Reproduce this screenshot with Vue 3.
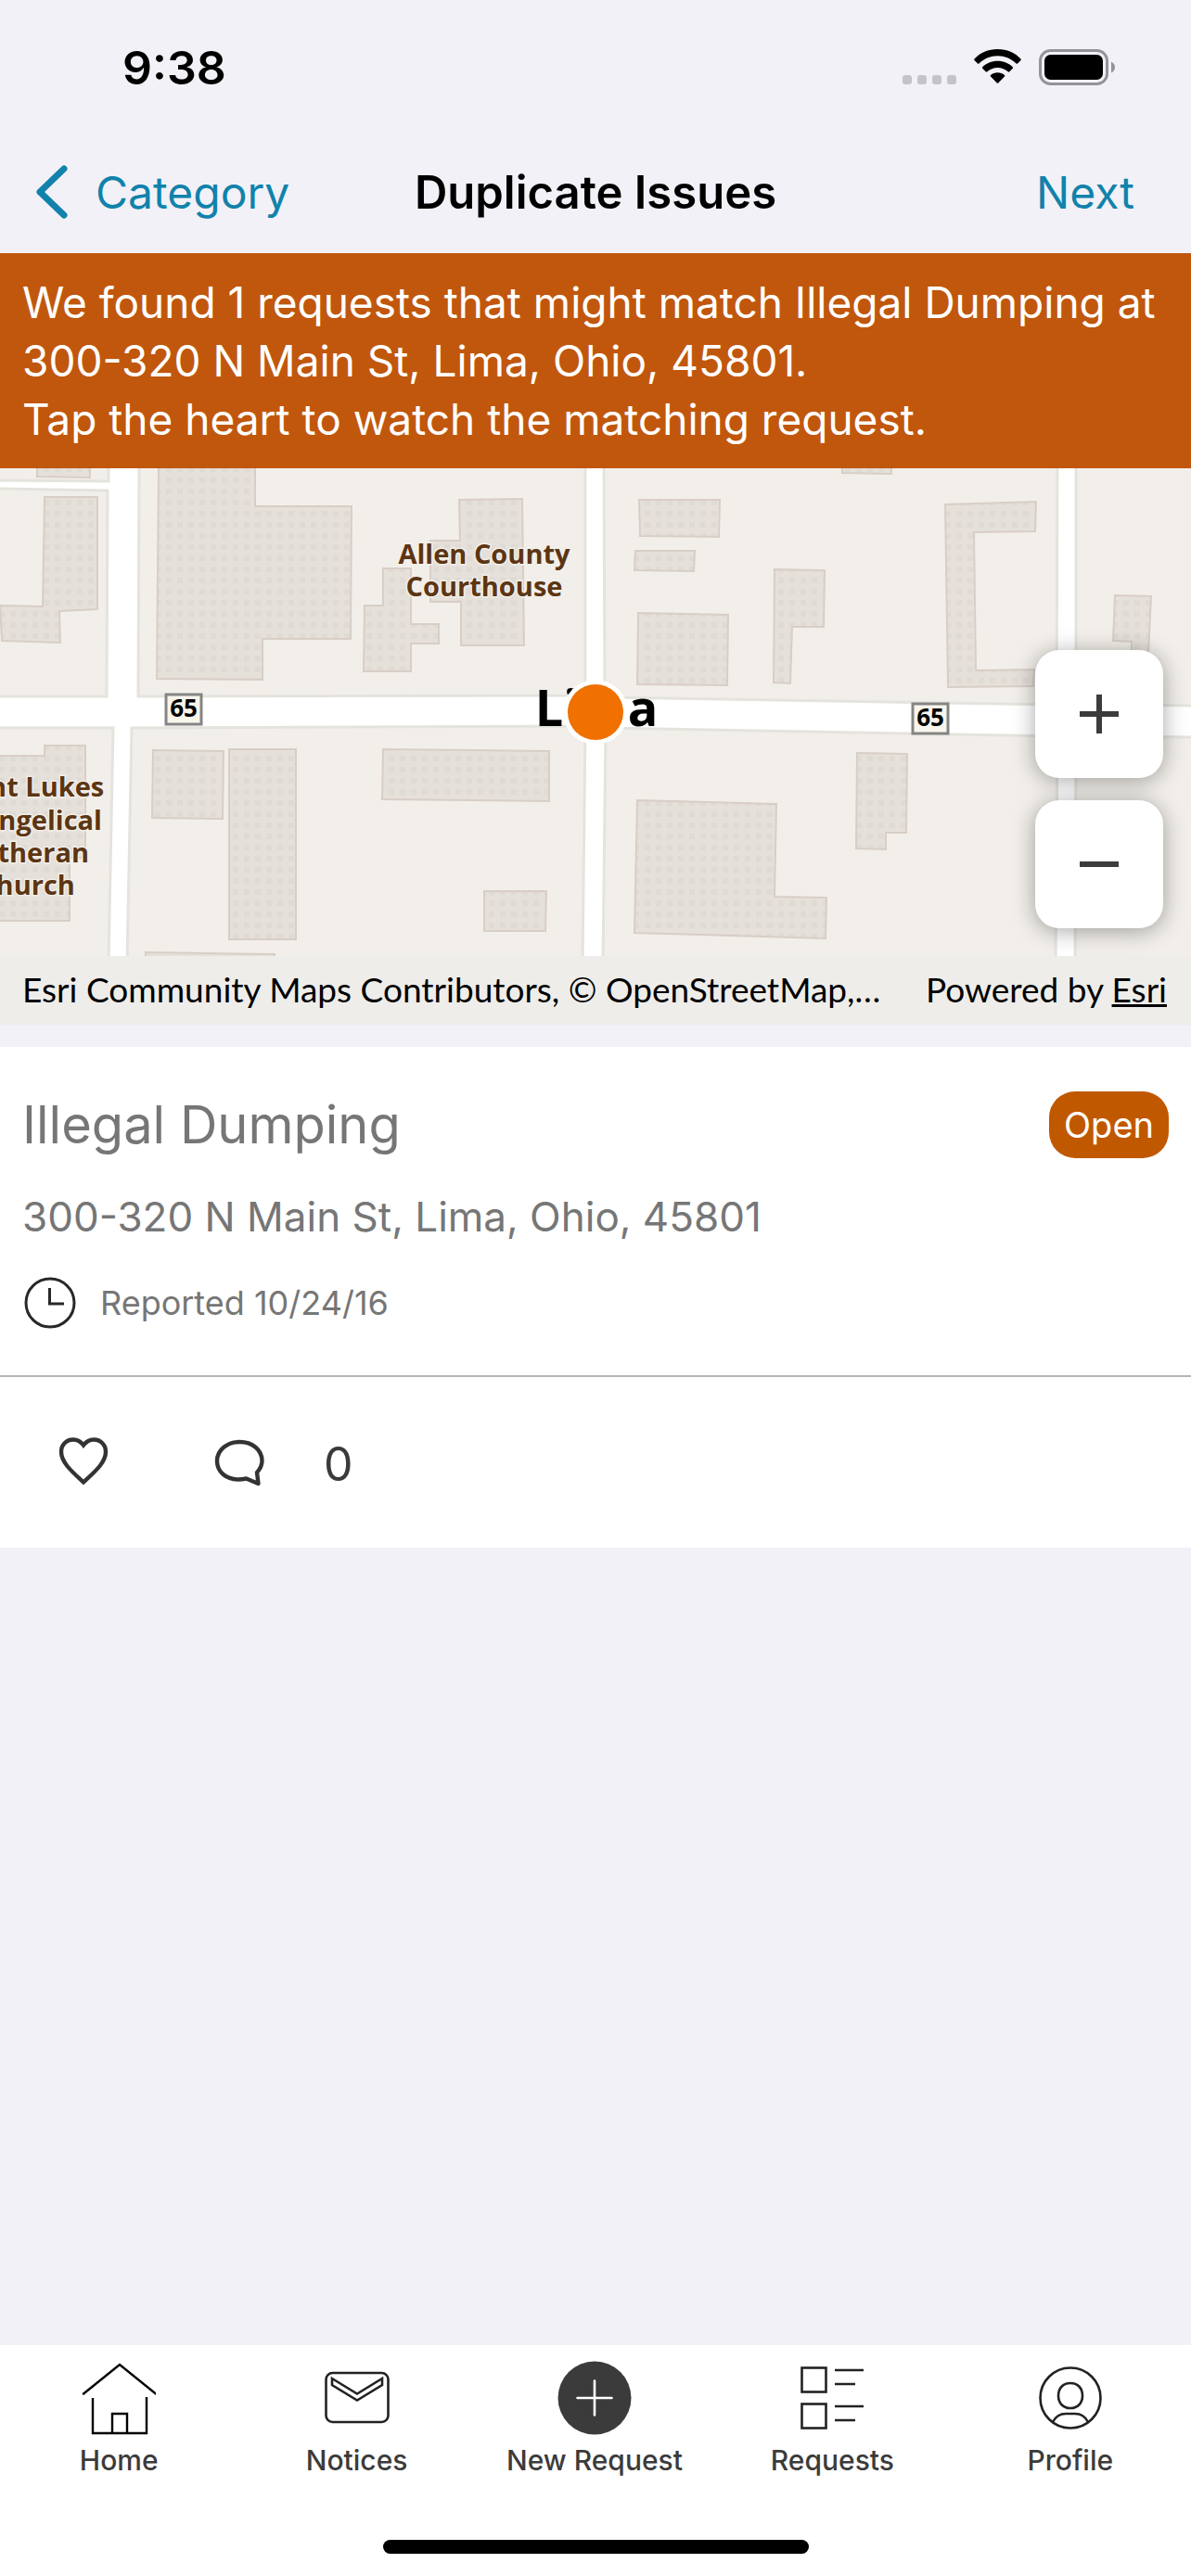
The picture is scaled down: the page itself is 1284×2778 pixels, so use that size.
<script setup>
import { ref } from 'vue'

const isWatching = ref(false)

const issue = {
  type: 'Illegal Dumping',
  address: '300-320 N Main St, Lima, Ohio, 45801',
  reported: '10/24/16',
  status: 'Open',
  comments: 0
}

const tabs = ['Home', 'Notices', 'New Request', 'Requests', 'Profile']

// city blocks, the streets are the gaps between them
const blocks = [
  '-5,-5 117,-5 117,14 -5,13',
  '-5,22 116,24 115,246 -5,246',
  '150,-5 631,-5 631,245 149,246',
  '651,-5 1140,-5 1139,255 652,247',
  '1160,-5 1290,-5 1290,256 1160,255',
  '-5,280 122,280 117,535 -5,535',
  '142,280 631,278 628,535 137,535',
  '653,280 1140,289 1138,535 650,535',
  '1160,289 1290,290 1290,535 1159,535'
]

const buildings = [
  '40,-5 97,-5 97,10 40,9',
  '48,31 105,31 105,152 64,154 65,188 2,186 0,148 46,149',
  '171,-5 275,-5 275,41 379,41 378,184 283,184 283,228 169,227',
  '413,108 443,108 443,168 473,168 473,189 443,189 443,219 392,219 393,148 413,148',
  '495,34 563,33 565,191 497,191 497,144 464,144 464,78 496,78',
  '689,34 776,34 775,74 690,73',
  '685,89 749,89 748,111 684,110',
  '688,156 785,158 784,234 687,233',
  '835,109 889,110 888,171 854,171 852,232 834,231',
  '1019,39 1117,36 1116,68 1050,69 1052,218 1115,217 1114,235 1022,236',
  '908,-5 961,-5 961,6 908,5',
  '1202,137 1241,138 1237,220 1219,220 1220,187 1200,186',
  '-5,310 48,310 48,299 92,299 92,420 75,420 75,488 -5,488',
  '165,304 241,305 240,378 164,377',
  '247,303 319,303 319,508 247,508',
  '413,303 592,305 592,359 412,357',
  '522,456 589,456 588,499 522,499',
  '687,358 837,362 835,462 891,463 890,507 684,501',
  '924,307 978,308 977,393 955,393 955,411 923,410',
  '157,522 296,524 296,535 157,535'
]
</script>

<template>
  <div class="screen">
    <header class="top">
      <div class="status-bar">
        <span class="time">9:38</span>
        <div class="status-icons">
          <svg width="58" height="38" viewBox="0 0 58 38" fill="#c4c3c8">
            <rect v-for="n in 4" :key="n" :x="(n - 1) * 16" y="28" width="10" height="10" rx="3" />
          </svg>
          <svg width="51" height="38" viewBox="0 0 51 38">
            <path d="M25.5 0C35.500 0 44.500 4 50.500 10.500Q51.200 11.300 50.500 12L47 15.500Q46.300 16.200 45.500 15.400C40 10.200 33 7.300 25.500 7.300S11 10.200 5.500 15.400Q4.700 16.200 4 15.500L.5 12Q-.2 11.300 .5 10.500C6.500 4 15.500 0 25.500 0Z" />
            <path d="M25.500 12.700C32 12.700 37.600 15.200 41.800 19.200Q42.500 20 41.800 20.700L38.300 24.300Q37.500 25 36.700 24.300C33.600 21.600 29.800 20 25.500 20S17.400 21.600 14.300 24.300Q13.500 25 12.700 24.300L9.200 20.700Q8.500 20 9.200 19.200C13.400 15.200 19 12.700 25.500 12.700Z" />
            <path d="M25.500 25.300C28.500 25.300 31 26.400 33 28Q33.800 28.700 33 29.500L26.200 36.500Q25.500 37.200 24.800 36.500L18 29.500Q17.200 28.700 18 28C20 26.400 22.500 25.300 25.500 25.300Z" />
          </svg>
          <svg width="82" height="40" viewBox="0 0 82 40">
            <rect x="1.500" y="1.500" width="72" height="36" rx="11" fill="none" stroke="#949397" stroke-width="3" />
            <rect x="6" y="6" width="63" height="27" rx="6.500" />
            <path d="M78 13.500Q82 15.500 82 19.500T78 25.500Z" fill="#949397" />
          </svg>
        </div>
      </div>
      <nav class="nav-bar">
        <button class="nav-btn">
          <svg width="34" height="58" viewBox="0 0 34 58" fill="none" stroke="currentColor" stroke-width="7" stroke-linecap="round" stroke-linejoin="round">
            <path d="M30 4L4 29L30 54" />
          </svg>
          Category
        </button>
        <h1>Duplicate Issues</h1>
        <button class="nav-btn next">Next</button>
      </nav>
    </header>

    <p class="banner">
      We found 1 requests that might match {{ issue.type }} at {{ issue.address }}.<br>
      Tap the heart to watch the matching request.
    </p>

    <section class="map">
      <svg class="map-canvas" viewBox="0 0 1284 526" preserveAspectRatio="xMidYMid slice">
        <defs>
          <pattern id="dots" x="-1" y="-2" width="12" height="12" patternUnits="userSpaceOnUse">
            <rect width="12" height="12" fill="#e5e0da" />
            <rect width="6" height="6" fill="#dfdad4" />
          </pattern>
        </defs>
        <rect width="1284" height="526" fill="#fff" />
        <polygon v-for="b in blocks" :key="b" :points="b" fill="#f2efea" stroke="#e5e3dd" stroke-width="3" />
        <polygon v-for="b in buildings" :key="b" :points="b" fill="url(#dots)" stroke="#d8cec6" stroke-width="2" />

        <g class="place">
          <text x="522" y="103">Allen County</text>
          <text x="522" y="138">Courthouse</text>
          <text x="29" y="354">Saint Lukes</text>
          <text x="29" y="390">Evangelical</text>
          <text x="29" y="425">Lutheran</text>
          <text x="29" y="460">Church</text>
        </g>

        <g class="shield">
          <rect x="179" y="244" width="38" height="32" />
          <text x="198" y="268">65</text>
          <rect x="984" y="254" width="38" height="32" />
          <text x="1003" y="278">65</text>
        </g>

        <text class="city" x="643" y="278">Lima</text>
        <circle cx="642" cy="263" r="35" fill="#fff" />
        <circle cx="642" cy="263" r="30" fill="#f07000" />
      </svg>

      <div class="zoom">
        <button aria-label="Zoom in">
          <svg width="42" height="42" viewBox="0 0 42 42" fill="#3c3c3c">
            <path d="M18 0h6v18h18v6H24v18h-6V24H0v-6h18z" />
          </svg>
        </button>
        <button aria-label="Zoom out">
          <svg width="42" height="42" viewBox="0 0 42 42" fill="#3c3c3c">
            <rect y="18" width="42" height="6" />
          </svg>
        </button>
      </div>

      <div class="attribution">
        <span>Esri Community Maps Contributors, © OpenStreetMap,…</span>
        <span>Powered by <a href="#">Esri</a></span>
      </div>
    </section>

    <article class="card">
      <div class="card-body">
        <div class="card-head">
          <h2>{{ issue.type }}</h2>
          <span class="badge">{{ issue.status }}</span>
        </div>
        <p class="address">{{ issue.address }}</p>
        <p class="reported">
          <svg width="56" height="56" viewBox="0 0 56 56" fill="none" stroke="#282828" stroke-width="3">
            <circle cx="28" cy="28" r="26" />
            <path d="M27.500 12V29H43" />
          </svg>
          Reported {{ issue.reported }}
        </p>
      </div>
      <div class="card-actions">
        <button aria-label="Watch" @click="isWatching = !isWatching">
          <svg width="54" height="54" viewBox="0 0 54 54" :fill="isWatching ? '#333' : 'none'" stroke="#333" stroke-width="4.400">
            <path d="M27 8.500C24 4.500 20.500 2.500 16 2.500C8.500 2.500 3 8 3 15.500C3 27 14 36.500 27 48.500C40 36.500 51 27 51 15.500C51 8 45.500 2.500 38 2.500C33.500 2.500 30 4.500 27 8.500Z" />
          </svg>
        </button>
        <button aria-label="Comments">
          <svg width="54" height="54" viewBox="0 0 54 54" fill="none" stroke="#333" stroke-width="4.400" stroke-linejoin="round">
            <path d="M46 38C49.500 34 51.500 30 51.500 25.500C51.500 13.500 41 5 27.500 5S3 13.500 3 25.500S13 45.500 26 45.500C29 45.500 32 45 34.500 44.500L47.500 50Z" />
          </svg>
          <span>{{ issue.comments }}</span>
        </button>
      </div>
    </article>

    <footer class="tab-bar">
      <nav class="tabs">
        <a v-for="tab in tabs" :key="tab" href="#" class="tab">
          <svg width="80" height="80" viewBox="0 0 80 80" fill="none" stroke="#222" stroke-width="2.600">
            <g v-if="tab === 'Home'" stroke="#000" stroke-width="2.400">
              <path d="M2 35.500L41 4L80 35.500" stroke-linecap="round" />
              <path d="M12 40V78H70V39M33 78V57H49V78" />
            </g>
            <g v-else-if="tab === 'Notices'">
              <rect x="6.500" y="13" width="67" height="53" rx="7" />
              <path d="M13 19L40 35.500L67 19V26L40 42.500L13 26Z" />
            </g>
            <g v-else-if="tab === 'New Request'" stroke="#fff" stroke-linecap="round">
              <circle cx="40" cy="40" r="39.500" fill="#3b3b3b" stroke="none" />
              <path d="M40 21.500V58.500M21.500 40H58.500" />
            </g>
            <g v-else-if="tab === 'Requests'">
              <rect x="7.500" y="7.500" width="26" height="26" />
              <rect x="7.500" y="46.500" width="26" height="26" />
              <path d="M43 10H74M43 25H65M43 49H74M43 64H65" />
            </g>
            <g v-else>
              <circle cx="40" cy="40" r="32.500" />
              <path d="M40 24C48 24 53 29.500 53 37.500S48 51 40 51S27 45.500 27 37.500S32 24 40 24Z" />
              <path d="M21 66C24 60 29 57 35 57H45C51 57 56 60 59 66" />
            </g>
          </svg>
          {{ tab }}
        </a>
      </nav>
      <div class="home-indicator"></div>
    </footer>
  </div>
</template>

<style>
body {
  margin: 0;
  background: #f2f1f7;
}
</style>

<style scoped>
.screen {
  display: flex;
  flex-direction: column;
  min-height: 100vh;
  background: #f2f1f7;
  font-family: Inter, "Liberation Sans", sans-serif;
  color: #000;
}
.screen * {
  box-sizing: border-box;
}
h1, h2, p {
  margin: 0;
  font-weight: 400;
}
svg {
  display: block;
  flex-shrink: 0;
}
button {
  border: none;
  padding: 0;
  background: none;
  font-family: inherit;
  color: inherit;
  cursor: pointer;
}
.status-bar {
  display: flex;
  justify-content: space-between;
  align-items: center;
  height: 146px;
  padding: 0 82px 0 132px;
}
.time {
  font-size: 50px;
  font-weight: 600;
}
.status-icons {
  display: flex;
  gap: 19px;
}
.nav-bar {
  display: grid;
  grid-template-columns: 1fr auto 1fr;
  align-items: center;
  height: 127px;
  padding: 0 39px 5px;
}
.nav-btn {
  display: flex;
  align-items: center;
  gap: 30px;
  font-size: 48px;
  color: #1182ab;
}
.next {
  justify-self: end;
  padding-right: 22px;
}
h1 {
  font-size: 49px;
  font-weight: 600;
}
.banner {
  padding: 22px 24px 21px;
  background: #c1570d;
  color: #fff;
  font-size: 46px;
  line-height: 63px;
}
.map {
  position: relative;
}
.map-canvas {
  width: 100%;
  height: 526px;
}
.place {
  font: 700 29px "Open Sans", sans-serif;
  fill: #5c3512;
  text-anchor: middle;
  stroke: #f2efea;
  stroke-width: 3px;
  paint-order: stroke;
}
.shield rect {
  fill: #f8f5ec;
  stroke: #858585;
  stroke-width: 3px;
}
.shield text {
  font: 700 26px "Open Sans", sans-serif;
  text-anchor: middle;
}
.city {
  font: 700 54px "Open Sans", sans-serif;
  text-anchor: middle;
}
.zoom {
  position: absolute;
  right: 30px;
  bottom: 104px;
  display: flex;
  flex-direction: column;
  gap: 24px;
}
.zoom button {
  display: grid;
  place-items: center;
  width: 138px;
  height: 138px;
  border-radius: 26px;
  background: #fff;
  box-shadow: 0 3px 24px rgba(0, 0, 0, 0.35);
}
.attribution {
  display: flex;
  justify-content: space-between;
  align-items: center;
  height: 74px;
  padding: 0 26px 4px 24px;
  background: #eeedea;
  font-family: Lato, sans-serif;
  font-size: 37px;
}
.attribution a {
  color: inherit;
}
.card {
  margin-top: 24px;
  background: #fff;
  color: #767676;
}
.card-body {
  padding: 48px 24px 50px;
  border-bottom: 2px solid #b5b5b5;
}
.card-head {
  display: flex;
  justify-content: space-between;
  align-items: center;
}
h2 {
  font-size: 56px;
  line-height: 72px;
}
.badge {
  padding: 0 16px;
  border-radius: 28px;
  background: #c05800;
  color: #fff;
  font-size: 38px;
  line-height: 72px;
}
.address {
  margin-top: 33px;
  font-size: 44px;
  line-height: 60px;
}
.reported {
  display: flex;
  align-items: center;
  gap: 26px;
  margin-top: 35px;
  padding-left: 2px;
  font-size: 36px;
}
.card-actions {
  display: flex;
  gap: 114px;
  padding: 65px 63px 61px;
}
.card-actions button {
  display: flex;
  align-items: flex-start;
  gap: 64px;
  color: #3a3a3a;
  font-size: 50px;
  line-height: 58px;
}
.tab-bar {
  margin-top: auto;
  padding: 17px 0 24px;
  background: #fff;
}
.tabs {
  display: grid;
  grid-template-columns: repeat(5, 1fr);
  padding-right: 2px;
}
.tab {
  display: flex;
  flex-direction: column;
  align-items: center;
  gap: 9px;
  color: #3b3b3b;
  font-size: 30px;
  font-weight: 500;
  line-height: 36px;
  text-decoration: none;
}
.home-indicator {
  width: 459px;
  height: 15px;
  margin: 68px auto 0;
  border-radius: 8px;
  background: #000;
}
</style>
